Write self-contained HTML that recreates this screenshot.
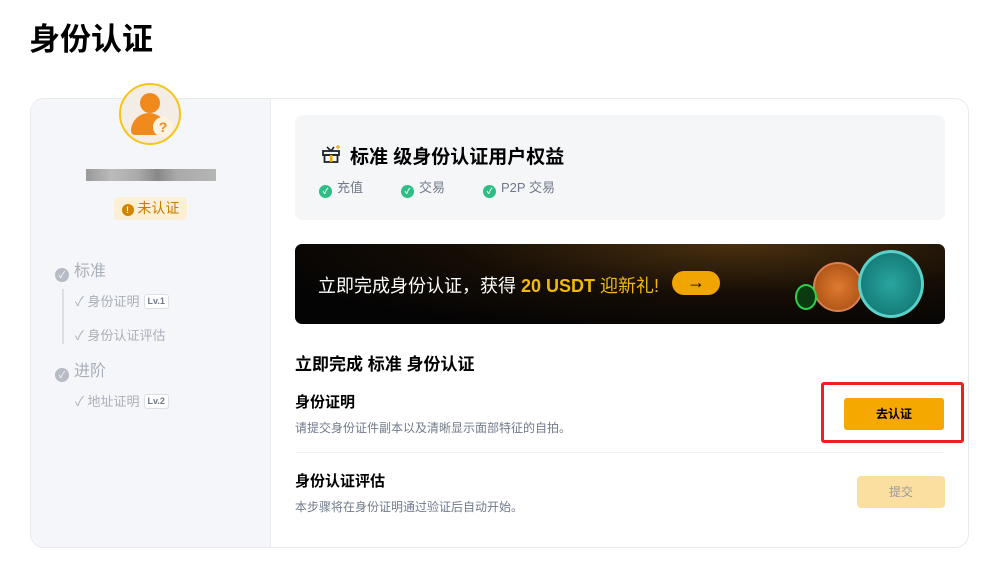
<!DOCTYPE html>
<html><head><meta charset="utf-8"><style>
*{margin:0;padding:0;box-sizing:border-box}
body{width:987px;height:566px;background:#fff;font-family:"Liberation Sans","Noto Sans CJK SC",sans-serif;position:relative;overflow:hidden;color:#1e2329}
.abs{position:absolute}
h1{position:absolute;left:29px;top:14px;font-size:31px;font-weight:700;color:#000}
.card{left:30px;top:98px;width:939px;height:450px;border:1px solid #e8eaee;border-radius:14px;overflow:hidden}
.left{left:0;top:0;width:240px;height:100%;background:#f5f6fa;border-right:1px solid #e8eaee}
.g{color:#a9afb8;font-size:14px}
.lv{display:inline-block;border:1px solid #dcdfe4;border-radius:3px;font-size:9px;font-weight:700;color:#707a8a;padding:0 3px;line-height:13px;margin-left:4px;vertical-align:2px;background:#fff}
.dot{display:inline-block;width:14px;height:14px;border-radius:50%;background:#b7bcc4;vertical-align:-2px;margin-right:5px;color:#fff;font-size:9px;line-height:14px;text-align:center}
.gd{display:inline-block;width:13px;height:13px;border-radius:50%;background:#2ebd85;vertical-align:-2px;margin-right:5px;color:#fff;font-size:8px;line-height:13px;text-align:center;font-weight:700}
</style></head><body>
<h1>身份认证</h1>
<div class="abs card">
 <div class="abs left">
  <div class="abs g" style="left:24px;top:158px;font-size:16px"><span class="dot">✓</span>标准</div>
  <div class="abs" style="left:31px;top:190px;width:2px;height:55px;background:#dcdfe4"></div>
  <div class="abs g" style="left:44px;top:192px;font-size:13px">✓ 身份证明<span class="lv">Lv.1</span></div>
  <div class="abs g" style="left:44px;top:226px;font-size:13px">✓ 身份认证评估</div>
  <div class="abs g" style="left:24px;top:258px;font-size:16px"><span class="dot">✓</span>进阶</div>
  <div class="abs g" style="left:44px;top:292px;font-size:13px">✓ 地址证明<span class="lv">Lv.2</span></div>
  <div class="abs" style="left:83px;top:98px;width:73px;height:23px;background:#fbefd5;border-radius:4px;color:#c77c00;font-size:14px;line-height:23px;text-align:center"><span style="display:inline-block;width:12px;height:12px;border-radius:50%;background:#d08500;color:#fff;font-size:9px;line-height:12px;font-weight:700;vertical-align:0px">!</span> 未认证</div>
  <div class="abs" style="left:55px;top:70px;width:130px;height:12px;background:linear-gradient(90deg,#999,#bbb 20%,#aaa 40%,#888 55%,#aaa 70%,#b5b5b5)"></div>
 </div>
 <div class="abs" style="left:264px;top:16px;width:650px;height:105px;background:#f5f6f7;border-radius:8px">
  <svg class="abs" style="left:26px;top:30px" width="20" height="18" viewBox="0 0 20 18"><rect x="2" y="6" width="16" height="4" fill="none" stroke="#1e2329" stroke-width="1.8"/><rect x="3.5" y="10" width="13" height="7" fill="none" stroke="#1e2329" stroke-width="1.8"/><rect x="9" y="10" width="2.5" height="7" fill="#f0a500"/><path d="M10 6 L6 2 M10 6 L13 2" stroke="#1e2329" stroke-width="1.6"/><path d="M17 0v4M15 2h4" stroke="#f0a500" stroke-width="1.2"/></svg>
  <div class="abs" style="left:55px;top:27px;font-size:19px;font-weight:700;color:#000">标准 级身份认证用户权益</div>
  <div class="abs" style="left:24px;top:62px;font-size:13px;color:#707a8a"><span class="gd">✓</span>充值</div>
  <div class="abs" style="left:106px;top:62px;font-size:13px;color:#707a8a"><span class="gd">✓</span>交易</div>
  <div class="abs" style="left:188px;top:62px;font-size:13px;color:#707a8a"><span class="gd">✓</span>P2P 交易</div>
 </div>
 <div class="abs" style="left:264px;top:145px;width:650px;height:80px;background:radial-gradient(ellipse at 68% 0%,#4a3010,#150d05 45%,#050404 80%);border-radius:7px">
  <div class="abs" style="left:23px;top:28px;font-size:18px;color:#fff;white-space:nowrap">立即完成身份认证，获得 <b style="color:#f0b90b">20 USDT</b> <span style="color:#f0b90b">迎新礼!</span></div>
  <div class="abs" style="left:377px;top:27px;width:48px;height:24px;border-radius:12px;background:#f0a500;text-align:center;font-size:18px;line-height:22px;color:#000">→</div>
  <div class="abs" style="left:518px;top:18px;width:50px;height:50px;border-radius:50%;background:radial-gradient(circle,#e07a30,#a04a10);border:2px solid #d88050"></div>
  <div class="abs" style="left:500px;top:40px;width:22px;height:26px;border-radius:50%;background:#0a3a10;border:2px solid #2fd04a"></div>
  <div class="abs" style="left:563px;top:6px;width:66px;height:68px;border-radius:50%;background:radial-gradient(circle,#2aa5a0,#0d6e6a);border:3px solid #5ad0c8"></div>
 </div>
 <div class="abs" style="left:264px;top:251px;font-size:17px;font-weight:700;color:#000">立即完成 标准 身份认证</div>
 <div class="abs" style="left:264px;top:292px;font-size:15px;font-weight:700;color:#000">身份证明</div>
 <div class="abs" style="left:264px;top:320px;font-size:12px;color:#707a8a">请提交身份证件副本以及清晰显示面部特征的自拍。</div>
 <div class="abs" style="left:790px;top:283px;width:143px;height:61px;border:3px solid #f01e1e;border-radius:3px"></div>
 <div class="abs" style="left:813px;top:299px;width:100px;height:32px;background:#f5a800;border-radius:3px;text-align:center;line-height:32px;font-size:12px;font-weight:700;color:#000">去认证</div>
 <div class="abs" style="left:264px;top:353px;width:650px;height:1px;background:#eef0f2"></div>
 <div class="abs" style="left:264px;top:371px;font-size:15px;font-weight:700;color:#000">身份认证评估</div>
 <div class="abs" style="left:264px;top:399px;font-size:12px;color:#707a8a">本步骤将在身份证明通过验证后自动开始。</div>
 <div class="abs" style="left:826px;top:377px;width:88px;height:32px;background:#fbdfa0;border-radius:4px;text-align:center;line-height:32px;font-size:12px;color:#999">提交</div>
</div>
<div class="abs" style="left:119px;top:83px;width:62px;height:62px;border-radius:50%;background:#f3ede5;border:2px solid #f5c518">
 <div class="abs" style="left:19px;top:8px;width:20px;height:20px;border-radius:50%;background:#f08a1c"></div>
 <div class="abs" style="left:10px;top:28px;width:36px;height:22px;border-radius:18px 18px 4px 4px;background:#f08a1c"></div>
 <div class="abs" style="left:32px;top:32px;width:20px;height:20px;border-radius:50%;background:#fff3e0;color:#f08a1c;font-weight:700;font-size:14px;text-align:center;line-height:20px">?</div>
</div>
</body></html>
